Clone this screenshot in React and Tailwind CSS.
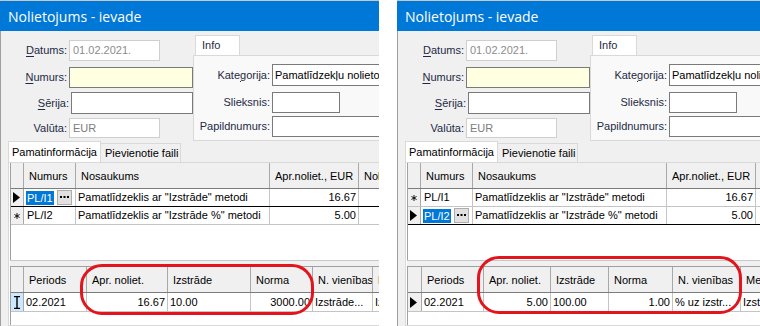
import React from "react";

const ui = "font-['Liberation_Sans',Arial,sans-serif] text-[11px] text-black";

function Ul({ children }) {
    return <span className="underline underline-offset-2">{children}</span>;
}

function FieldRow({ label, className, labelW, children }) {
    return (
        <div className={`flex items-center ${className}`}>
            <div className={`${labelW} shrink-0 pr-[2px] text-right text-[#1e2a44]`}>{label}</div>
            {children}
        </div>
    );
}

function Indicator({ kind }) {
    if (kind === "arrow") {
        return (
            <svg width="7" height="11" viewBox="0 0 7 11" className="ml-[2px]">
                <path d="M0 0 L7 5.5 L0 11 Z" fill="#000" />
            </svg>
        );
    }
    if (kind === "star") {
        return (
            <svg width="6" height="6" viewBox="0 0 6 6" className="ml-[3px]">
                <path d="M3 0 V6 M0.4 1.5 L5.6 4.5 M5.6 1.5 L0.4 4.5" stroke="#000" strokeWidth="0.9" fill="none" />
            </svg>
        );
    }
    if (kind === "cursor") {
        return (
            <svg width="8" height="13" viewBox="0 0 8 13" className="ml-[2px]">
                <path d="M1 0.5 H7 M1 12.5 H7 M4 0.5 V12.5" stroke="#000" strokeWidth="1.4" fill="none" />
            </svg>
        );
    }
    return null;
}

function Grid({ cols, rows, className, selected }) {
    return (
        <div className={className}>
            {/* header */}
            <div className="flex h-[26px] border-b border-[#7c7c7c] bg-[#f0f0f0]">
                {cols.map((c, i) => (
                    <div
                        key={i}
                        style={{ width: c.w }}
                        className="flex shrink-0 items-center overflow-hidden whitespace-nowrap border-r border-[#a8a8a8] pl-[5px] pt-[2px]"
                    >
                        {c.label}
                    </div>
                ))}
            </div>
            {rows.map((r, ri) => (
                <div
                    key={ri}
                    className={`flex border-b ${r.h} ${selected === ri ? "border-black" : "border-[#c4c4c4]"}`}
                >
                    {cols.map((c, i) => {
                        const cell = r.cells[i];
                        if (i === 0) {
                            return (
                                <div
                                    key={i}
                                    style={{ width: c.w }}
                                    className={`flex shrink-0 items-center border-r border-[#a8a8a8] ${r.indBg || "bg-[#f0f0f0]"}`}
                                >
                                    <Indicator kind={cell} />
                                </div>
                            );
                        }
                        return (
                            <div
                                key={i}
                                style={{ width: c.w }}
                                className={`flex shrink-0 items-center overflow-hidden whitespace-nowrap border-r border-[#c4c4c4] px-[2px] ${c.right ? "justify-end" : ""}`}
                            >
                                {cell}
                            </div>
                        );
                    })}
                </div>
            ))}
        </div>
    );
}

function NumCell({ text, active }) {
    if (!active) return <span className="pl-[1px]">{text}</span>;
    return (
        <div className="flex w-full items-center justify-between pr-[1px]">
            <span className="bg-[#0078d7] px-[1px] text-white leading-[14px]">{text}</span>
            <span className="flex h-[15px] w-[15px] items-center justify-center border border-[#adadad] bg-[#e1e1e1] pb-[1px]">
                <svg width="9" height="2" viewBox="0 0 9 2">
                    <rect x="0" y="0" width="2" height="2" fill="#000" />
                    <rect x="3.5" y="0" width="2" height="2" fill="#000" />
                    <rect x="7" y="0" width="2" height="2" fill="#000" />
                </svg>
            </span>
        </div>
    );
}

function Window({ data, className }) {
    const upperCols = [
        { w: 13, label: "" },
        { w: 52, label: "Numurs" },
        { w: 194, label: "Nosaukums" },
        { w: 89, label: "Apr.noliet., EUR", right: true },
        { w: 70, label: "Nolietojuma" },
    ];
    const upperRows = data.upper.map((u) => ({
        h: "h-[18px]",
        cells: [
            u.ind,
            <NumCell text={u.num} active={u.active} />,
            u.name,
            u.val,
            "",
        ],
    }));

    return (
        <div className={`relative h-[326px] shrink-0 overflow-hidden border-t border-[#c8c8c8] bg-[#f0f0f0] ${ui} ${className}`}>
            <div className="w-[440px]">
                {/* title bar */}
                <div className="flex h-[30px] items-center bg-[#0078d7] pl-[8px] font-['Open_Sans',sans-serif] text-[14px] text-white">
                    Nolietojums - ievade
                </div>

                {/* header form */}
                <div className="flex h-[110px] border-l border-[#a0a0a0]">
                    <div className="w-[192px] shrink-0">
                        <FieldRow label={<><Ul>D</Ul>atums:</>} labelW="w-[68px]" className="mt-[9px]">
                            <div className="flex h-[21px] w-[91px] items-center border border-[#cfcfcf] bg-white pl-[3px] text-[#8c8c8c]">
                                01.02.2021.
                            </div>
                        </FieldRow>
                        <FieldRow label={<><Ul>N</Ul>umurs:</>} labelW="w-[68px]" className="mt-[6px]">
                            <div className="h-[21px] flex-1 border border-[#7a7a7a] bg-[#ffffe1]" />
                        </FieldRow>
                        <FieldRow label={<><Ul>S</Ul>ērija:</>} labelW="w-[70px]" className="mt-[4px]">
                            <div className="h-[22px] flex-1 border border-[#7a7a7a] bg-white" />
                        </FieldRow>
                        <FieldRow label="Valūta:" labelW="w-[68px]" className="mt-[4px]">
                            <div className="flex h-[20px] w-[91px] items-center border border-[#cfcfcf] bg-white pl-[3px] text-[#7c7c7c]">
                                EUR
                            </div>
                        </FieldRow>
                    </div>

                    <div className="flex flex-1 flex-col pt-[4px]">
                        <div className="ml-[2px] flex h-[20px] w-[45px] items-center border border-b-0 border-[#d9d9d9] bg-white pl-[6px] text-[#1e2a44]">
                            Info
                        </div>
                        <div className="flex-1 border border-[#d9d9d9] bg-[#f9f9f9] pt-[8px]">
                            <FieldRow label={<>Kate<Ul>g</Ul>orija:</>} labelW="w-[78px]">
                                <div className="flex h-[22px] flex-1 items-center overflow-hidden whitespace-nowrap border border-[#7a7a7a] bg-white pl-[2px]">
                                    Pamatlīdzekļu nolietojums
                                </div>
                            </FieldRow>
                            <FieldRow label="Slieksnis:" labelW="w-[78px]" className="mt-[6px]">
                                <div className="h-[21px] w-[68px] border border-[#7a7a7a] bg-white" />
                            </FieldRow>
                            <FieldRow label="Papildnumurs:" labelW="w-[78px]" className="mt-[3px]">
                                <div className="h-[21px] flex-1 border border-[#7a7a7a] bg-white" />
                            </FieldRow>
                        </div>
                    </div>
                </div>

                {/* tabs */}
                <div className="flex h-[21px] items-end border-l border-[#a0a0a0] pl-[7px]">
                    <div className="flex h-[21px] w-[93px] items-center border border-b-0 border-[#d9d9d9] bg-white pl-[3px]">
                        Pamatinformācija
                    </div>
                    <div className="flex h-[19px] w-[80px] items-center border border-b-0 border-l-0 border-[#d9d9d9] bg-[#f0f0f0] pl-[4px]">
                        Pievienotie faili
                    </div>
                </div>

                {/* tab page */}
                <div className="flex h-[164px] border-l border-[#a0a0a0] pl-[7px]">
                    <div className="flex flex-1 flex-col border border-[#d9d9d9] bg-white pl-[1px]">
                        <Grid
                            cols={upperCols}
                            rows={upperRows}
                            selected={data.upperSel}
                            className="h-[97px] border-l border-[#a0a0a0] bg-white"
                        />
                        <div className="h-[6px] border-t border-[#c8c8c8] bg-[#f0f0f0]" />
                        <Grid
                            cols={data.lowerCols}
                            rows={[{ h: "h-[19px]", indBg: data.lowerIndBg, cells: data.lower }]}
                            className="flex-1 border-l border-t border-[#a0a0a0] bg-white"
                        />
                    </div>
                </div>
            </div>

            {/* red highlight */}
            <div className={`pointer-events-none absolute rounded-[22px] border-[3px] border-[#e3141b] ${data.ring}`} />
        </div>
    );
}

const left = {
    upperSel: 0,
    upper: [
        { ind: "arrow", num: "PL/I1", active: true, name: "Pamatlīdzeklis ar \"Izstrāde\" metodi", val: "16.67" },
        { ind: "star", num: "PL/I2", active: false, name: "Pamatlīdzeklis ar \"Izstrāde %\" metodi", val: "5.00" },
    ],
    lowerCols: [
        { w: 13, label: "" },
        { w: 63, label: "Periods" },
        { w: 81, label: "Apr. noliet.", right: true },
        { w: 83, label: "Izstrāde" },
        { w: 62, label: "Norma", right: true },
        { w: 60, label: "N. vienības" },
        { w: 70, label: "Metode" },
    ],
    lowerIndBg: "bg-[#cce8ff]",
    lower: ["cursor", "02.2021", "16.67", "10.00", "3000.00", "Izstrāde...", "Izstrāde"],
    ring: "left-[80px] top-[263px] h-[51px] w-[234px]",
};

const right = {
    upperSel: 1,
    upper: [
        { ind: "star", num: "PL/I1", active: false, name: "Pamatlīdzeklis ar \"Izstrāde\" metodi", val: "16.67" },
        { ind: "arrow", num: "PL/I2", active: true, name: "Pamatlīdzeklis ar \"Izstrāde %\" metodi", val: "5.00" },
    ],
    lowerCols: [
        { w: 14, label: "" },
        { w: 62, label: "Periods" },
        { w: 67, label: "Apr. noliet.", right: true },
        { w: 58, label: "Izstrāde" },
        { w: 64, label: "Norma", right: true },
        { w: 68, label: "N. vienības" },
        { w: 70, label: "Metode" },
    ],
    lowerIndBg: "bg-[#f0f0f0]",
    lower: ["arrow", "02.2021", "5.00", "100.00", "1.00", "% uz izstr...", "Izstrāde"],
    ring: "left-[80px] top-[255px] h-[58px] w-[265px]",
};

export default function App() {
    return (
        <div className="flex h-[326px] w-[760px] overflow-hidden bg-white">
            <Window data={left} className="w-[379px]" />
            <div className="w-[18px] shrink-0 bg-white" />
            <Window data={right} className="w-[363px]" />
        </div>
    );
}
